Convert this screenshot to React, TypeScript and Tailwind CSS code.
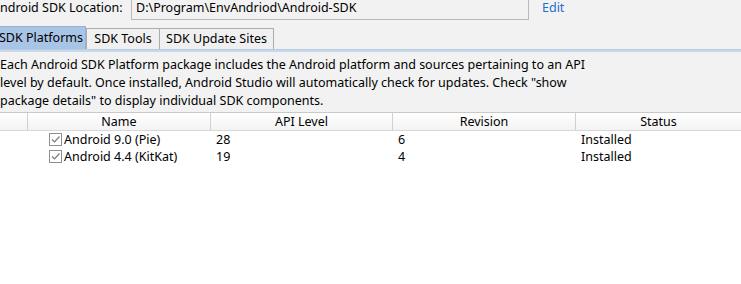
import React from "react";

function Check() {
  return (
    <span className="inline-flex items-center justify-center w-[13px] h-[13px] border border-[#8f8f8f] bg-white mr-[2px] shrink-0">
      <svg width="11" height="11" viewBox="0 0 11 11">
        <path d="M2 5.5 L4.5 8 L9.5 2.5" fill="none" stroke="#7a7a7a" strokeWidth="1.2" />
      </svg>
    </span>
  );
}

const rows = [
  { name: "Android 9.0 (Pie)", api: "28", rev: "6", status: "Installed" },
  { name: "Android 4.4 (KitKat)", api: "19", rev: "4", status: "Installed" },
];

export default function App() {
  return (
    <div
      className="w-[741px] h-[284px] overflow-hidden bg-[#f2f2f2] text-[12.5px] text-black leading-[18px]"
      style={{ fontFamily: '"Noto Sans", "Liberation Sans", sans-serif' }}
    >
      {/* Location row */}
      <div className="flex items-end h-[20px]">
        <span className="ml-[-8px] w-[139px] shrink-0 pb-[3px] whitespace-nowrap">Android SDK Location:</span>
        <div className="w-[398px] h-[26px] mt-[-7px] border border-[#b9b9b9] bg-[#f2f2f2] flex items-end pl-[4px] pb-[2px] shrink-0 whitespace-nowrap">
          D:\Program\EnvAndriod\Android-SDK
        </div>
        <span className="ml-[13px] text-[#1b6fd1] pb-[3px]">Edit</span>
      </div>

      {/* Tabs */}
      <div className="mt-[7px] flex items-end h-[22px]">
        <div className="w-[87px] h-[23px] bg-[#a8c4e6] border-r border-t border-[#9ab0cc] flex items-center ml-[-1px] whitespace-nowrap">
          <span className="ml-[0px]">SDK Platforms</span>
        </div>
        <div className="w-[74px] h-[21px] bg-[#f0f0f0] border border-b-0 border-[#adadad] flex items-center justify-center whitespace-nowrap">
          SDK Tools
        </div>
        <div className="w-[114px] h-[21px] bg-[#f0f0f0] border border-l-0 border-b-0 border-[#adadad] flex items-center justify-center whitespace-nowrap">
          SDK Update Sites
        </div>
      </div>
      <div className="h-[3px] bg-[#c8d9ec] border-t border-[#b8cbe0]" />

      {/* Description */}
      <div className="pt-[4px] w-[620px]">
        <div className="whitespace-nowrap">Each Android SDK Platform package includes the Android platform and sources pertaining to an API</div>
        <div className="whitespace-nowrap">level by default. Once installed, Android Studio will automatically check for updates. Check "show</div>
        <div className="whitespace-nowrap">package details" to display individual SDK components.</div>
      </div>

      {/* Table */}
      <div className="mt-[2px] bg-white h-[180px]">
        <div className="flex h-[19px] border-t border-[#c9c9c9] border-b border-b-[#d8d8d8] bg-gradient-to-b from-white to-[#f3f3f3]">
          <div className="w-[28px] border-r border-[#cfcfcf]" />
          <div className="w-[183px] border-r border-[#cfcfcf] flex items-center justify-center">Name</div>
          <div className="w-[182px] border-r border-[#cfcfcf] flex items-center justify-center">API Level</div>
          <div className="w-[183px] border-r border-[#cfcfcf] flex items-center justify-center">Revision</div>
          <div className="flex-1 flex items-center justify-center">Status</div>
        </div>
        <div className="pt-[0px]">
          {rows.map((r) => (
            <div key={r.name} className="flex h-[17px] items-center">
              <div className="w-[49px] shrink-0" />
              <div className="w-[162px] flex items-center shrink-0 whitespace-nowrap">
                <Check />
                <span>{r.name}</span>
              </div>
              <div className="w-[182px] pl-[5px] shrink-0">{r.api}</div>
              <div className="w-[183px] pl-[5px] shrink-0">{r.rev}</div>
              <div className="flex-1 pl-[5px]">{r.status}</div>
            </div>
          ))}
        </div>
      </div>
    </div>
  );
}
